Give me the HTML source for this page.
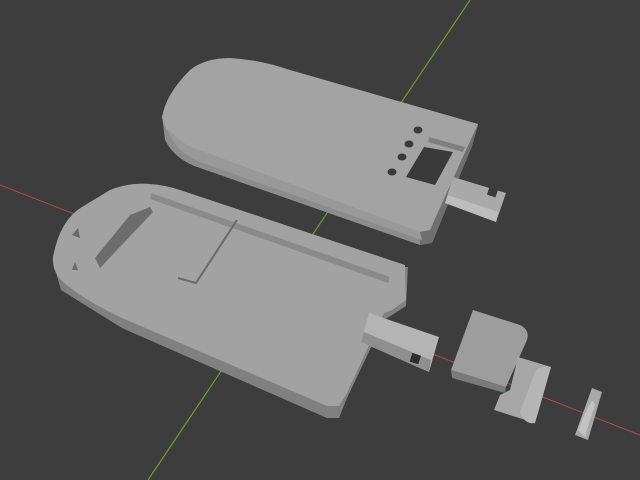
<!DOCTYPE html>
<html><head><style>html,body{margin:0;padding:0;background:#3d3d3d;}svg{display:block}</style></head>
<body>
<svg width="640" height="480" viewBox="0 0 640 480" xmlns="http://www.w3.org/2000/svg">
<rect width="640" height="480" fill="#3d3d3d"/>
<line x1="0" y1="185" x2="640" y2="435" stroke="#b0474f" stroke-width="1"/>
<line x1="470" y1="0" x2="148" y2="480" stroke="#6f9a2a" stroke-width="1.2"/>

<!-- bottom tray -->
<path d="M53,262 L61,290 L122,328 L327,418 L339,418 L347,398 L384,320 L392,315 L406,306 L408,267 Z" fill="#808080"/>
<path d="M53,257 Q60,220 82,207 L110,190 Q130,182 150,184 Q165,185 180,190 L405,265 L406,300 L392,310 L384,313 L347,393 L339,406 L327,406 L122,318 Q80,298 61,280 Q52,270 53,257 Z" fill="#a2a2a2"/>
<path d="M151,193 L390,277 L388,283 L150,199 Z" fill="#8a8a8a"/>
<path d="M237,220 L196,283 L178,278" fill="none" stroke="#6a6a6a" stroke-width="2"/>
<path d="M95,258 L130,215 L150,207 L153,212 L100,268 Z" fill="#6c6c6c"/>
<path d="M72,235 L78,228 L80,238 Z M75,262 L78,270 L72,270 Z" fill="#6a6a6a"/>

<!-- tube on tray -->
<path d="M369,313 L439,337 L429,372 L361,342 Z" fill="#b4b4b4"/>
<path d="M361,342 L429,372 L431,360 L364,332 Z" fill="#8f8f8f"/>
<rect x="411" y="354" width="9" height="9" fill="#2e2e2e" transform="rotate(18 415 358)"/>

<!-- block -->
<path d="M473,310 L520,325 Q530,330 527,340 L506,387 L451,370 Z" fill="#9d9d9d"/>
<path d="M451,370 L506,387 L505,393 L452,378 Z" fill="#7a7a7a"/>
<!-- cylinder -->
<path d="M518,357 L551,367 L535,423 L494,410 L500,395 L510,390 Z" fill="#a6a6a6"/>
<path d="M535,423 Q525,425 520,412 L535,372 Q540,365 551,367 L535,423 Z" fill="#b5b5b5"/>
<!-- ring -->
<path d="M592,388 L602,392 L588,440 L575,435 Z" fill="#a8a8a8"/>
<path d="M578,430 Q585,412 592,400 L595,405 Q588,425 585,437 Z" fill="#c2c2c2"/>

<!-- top shell -->
<path d="M162,115 L165,140 Q175,160 200,168 L420,245 L432,243 L472,146 L478,125 Z" fill="#8c8c8c"/>
<path d="M162,118 Q165,95 190,70 Q205,58 230,58 Q262,60 290,70 L478,124 L466,150 L430,230 L420,232 L195,152 Q168,140 162,118 Z" fill="#a3a3a3"/>
<path d="M420,232 L430,230 L466,150 L478,124 L472,146 L432,243 L420,245 Z" fill="#6f6f6f"/>
<path d="M168,128 Q180,145 205,152 L420,232 L422,240 L200,162 Q172,150 168,128 Z" fill="#999999"/>
<ellipse cx="418" cy="130" rx="4.5" ry="3.5" fill="#3a3a3a"/>
<ellipse cx="409" cy="144" rx="4.5" ry="3.5" fill="#3a3a3a"/>
<ellipse cx="402" cy="157" rx="4.5" ry="3.5" fill="#3a3a3a"/>
<ellipse cx="392" cy="172" rx="4.5" ry="3.5" fill="#3a3a3a"/>
<path d="M424,147 L453,152 L435,185 L406,177 Z" fill="#3a3a3a"/>
<path d="M429,137 L465,147 L463,152 L428,142 Z" fill="#7f7f7f"/>
<!-- top tube -->
<path d="M453,177 L506,193 L496,222 L445,203 Z" fill="#a9a9a9"/>
<path d="M445,203 L496,222 L498,212 L448,195 Z" fill="#bdbdbd"/>
<rect x="488" y="188" width="9" height="8" fill="#3a3a3a" transform="rotate(18 492 192)"/>
</svg>
</body></html>
